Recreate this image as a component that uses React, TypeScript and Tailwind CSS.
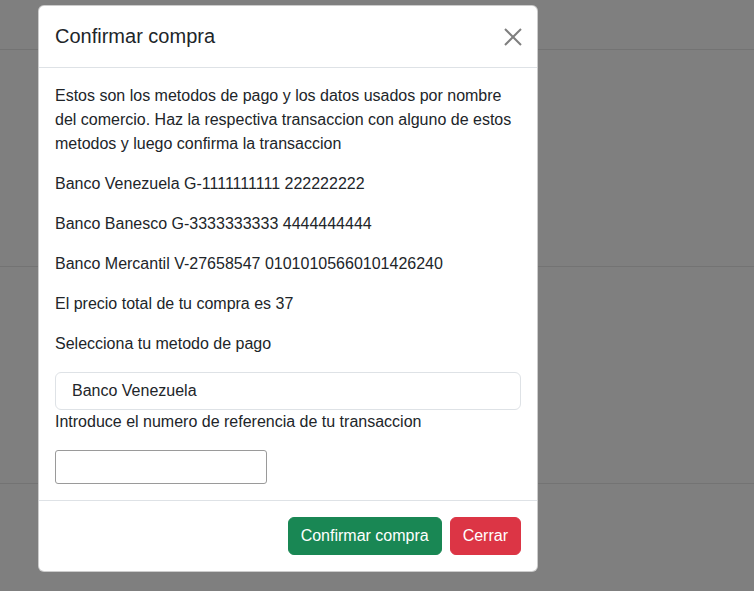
export default function App() {
  return (
    <div className="relative h-[591px] overflow-hidden bg-white font-['Liberation_Sans',Arial,sans-serif] text-[#212529]">
      {/* page behind the backdrop */}
      <div className="h-[50px] border-b border-[#e6e6e6]" />
      <div className="h-[217px] border-b border-[#e6e6e6]" />
      <div className="h-[217px] border-b border-[#e6e6e6]" />

      {/* backdrop + modal */}
      <div className="absolute inset-0 bg-black/50">
        <div className="ml-[38px] mt-[5px] w-[500px] rounded-md border border-black/20 bg-white">
          <div className="flex items-center justify-between border-b border-[#dee2e6] p-4">
            <h5 className="text-[20px] leading-[29px]">Confirmar compra</h5>
            <button className="mr-[-1px] flex h-[29px] w-[18px] items-center justify-center">
              <svg width="18" height="18" viewBox="0 0 18 18" fill="none">
                <path d="M1 1L17 17M17 1L1 17" stroke="#7f7f7f" strokeWidth="2" />
              </svg>
            </button>
          </div>

          <div className="p-4 text-base leading-6">
            <p className="mb-4">
              Estos son los metodos de pago y los datos usados por nombre del comercio. Haz la respectiva transaccion con alguno de estos metodos y luego confirma la transaccion
            </p>
            <p className="mb-4">Banco Venezuela G-1111111111 222222222</p>
            <p className="mb-4">Banco Banesco G-3333333333 4444444444</p>
            <p className="mb-4">Banco Mercantil V-27658547 01010105660101426240</p>
            <p className="mb-4">El precio total de tu compra es 37</p>
            <p className="mb-4">Selecciona tu metodo de pago</p>
            <div className="flex h-[38px] items-center rounded-md border border-[#dee2e6] pl-4">
              Banco Venezuela
            </div>
            <p className="mb-4">Introduce el numero de referencia de tu transaccion</p>
            <input className="block h-[34px] w-[212px] rounded-[3px] border border-[#9a9a9a] px-2" />
          </div>

          <div className="flex justify-end gap-2 border-t border-[#dee2e6] px-4 py-4">
            <button className="h-[38px] rounded-md border border-[#198754] bg-[#198754] px-3 text-base text-white">
              Confirmar compra
            </button>
            <button className="h-[38px] rounded-md border border-[#dc3545] bg-[#dc3545] px-3 text-base text-white">
              Cerrar
            </button>
          </div>
        </div>
      </div>
    </div>
  )
}
